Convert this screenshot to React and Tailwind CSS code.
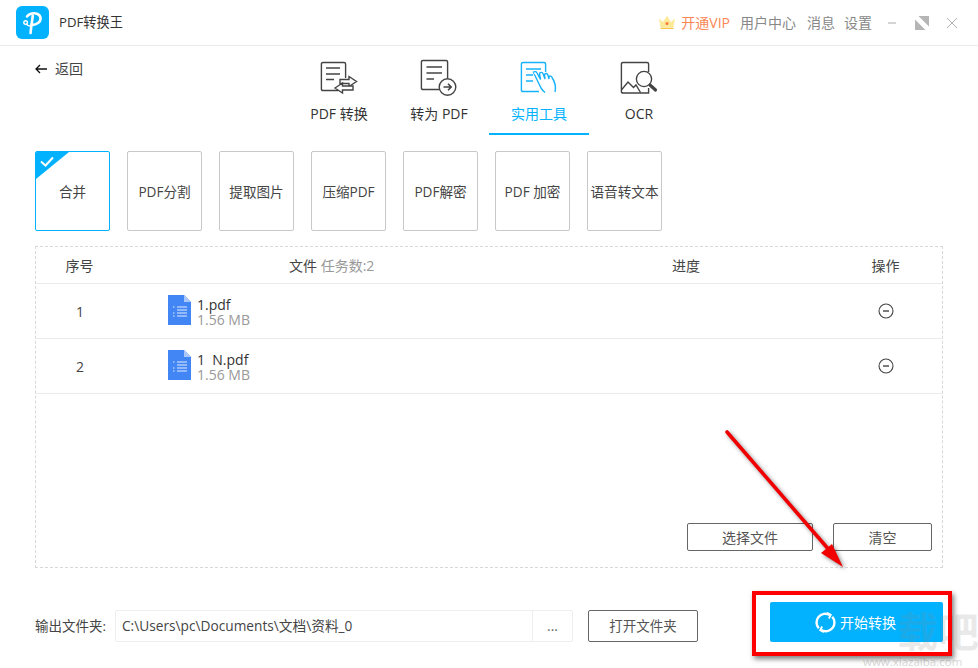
import React from "react";

const FONT = { fontFamily: '"Open Sans","Noto Sans CJK SC",sans-serif' };

function Logo() {
  return (
    <div className="w-[33px] h-[33px] rounded-[6px] bg-[#02b2ff] flex items-center justify-center">
      <svg width="33" height="33" viewBox="0 0 33 33" fill="none" stroke="#fff" strokeLinecap="round">
        <path d="M11 10.5C13 7.6 18 6.5 21.5 8C25.5 9.8 25.5 14.5 22 17C20 18.4 17.5 19 15.5 18.8" strokeWidth="2.6" />
        <path d="M16.8 9.5C16.2 15 15 21 14.6 27" strokeWidth="2.6" />
        <circle cx="9.6" cy="16.6" r="1.8" strokeWidth="1.4" />
        <path d="M10.8 18.5C12 20 13.5 20.2 15 20" strokeWidth="1.4" />
      </svg>
    </div>
  );
}

function Crown() {
  return (
    <svg width="18" height="15" viewBox="0 0 18 15">
      <path d="M1 3.5L5 7L9 0.8L13 7L17 3.5L15.5 12H2.5Z" fill="#fde99a" />
      <rect x="2.5" y="12.6" width="13" height="1.4" fill="#f9c646" />
      <circle cx="9" cy="8.5" r="1.5" fill="#fa7a3c" />
    </svg>
  );
}

function IconConvert() {
  return (
    <svg width="38" height="34" viewBox="0 0 38 34" fill="none" stroke="#444" strokeWidth="1.4">
      <path d="M18 29.5H3C1.9 29.5 1.4 29 1.4 28V3C1.4 2 1.9 1.5 3 1.5H24C25 1.5 25.6 2 25.6 3V17" />
      <path d="M6 7H20M6 13H20M6 18.5H14" />
      <path d="M20 18.5H29V15.5L36.5 20.5L29 25.5V22.5H20Z" fill="#fff" />
      <path d="M15 27L22.5 22V25H33V29H22.5V32Z" fill="#fff" />
    </svg>
  );
}

function IconToPdf() {
  return (
    <svg width="38" height="38" viewBox="0 0 38 38" fill="none" stroke="#444" strokeWidth="1.4">
      <path d="M19 30.5H3C1.9 30.5 1.4 30 1.4 29V3C1.4 2 1.9 1.5 3 1.5H26C27 1.5 27.6 2 27.6 3V19" />
      <path d="M6.5 8H22M6.5 14H22M6.5 20H14" />
      <circle cx="27.5" cy="28" r="8.3" fill="#fff" />
      <path d="M23.5 28H31M28 24.8L31.2 28L28 31.2" strokeWidth="1.6" />
    </svg>
  );
}

function IconTools() {
  return (
    <svg width="38" height="34" viewBox="0 0 38 34" fill="none" stroke="#15b2fb" strokeWidth="1.4">
      <path d="M19 30.5H3C1.9 30.5 1.4 30 1.4 29V3C1.4 2 1.9 1.5 3 1.5H24C25 1.5 25.6 2 25.6 3V11" />
      <path d="M6 8H21M6 14H13M6 20H13" />
      <path d="M13.5 11.5L21 27C22 28.5 23 30 25 31.5" />
      <path d="M13 11.5C14.5 10 16.5 10.5 17 12L20.5 18.5L19.5 12.5C20.5 11 22.5 11 23 12.5L25 18L24.5 13.5C25.5 12.2 27 12.2 27.8 13.8L29 18L29 15.5C30 14.5 31.5 15 32 16.5C35 21 36.5 25 35 31" fill="#fff" />
    </svg>
  );
}

function IconOcr() {
  return (
    <svg width="38" height="34" viewBox="0 0 38 34" fill="none" stroke="#444" strokeWidth="1.4">
      <path d="M17 32H3C1.9 32 1.4 31.5 1.4 30.5V3C1.4 2 1.9 1.5 3 1.5H27C28 1.5 28.6 2 28.6 3V11M28.6 27V32H15" />
      <path d="M1.4 29L8 21L13.5 26.5L16 24L20.5 31.5" />
      <circle cx="24" cy="18" r="7.6" fill="#fff" />
      <path d="M30 24L35.5 29" strokeWidth="3.2" strokeLinecap="round" />
    </svg>
  );
}

function Tab({ icon, label, active }) {
  return (
    <div className={`w-[100px] h-[89px] flex flex-col items-center border-b-2 ${active ? "border-[#02b2ff]" : "border-transparent"}`}>
      <div className="h-[58px] pt-[6px] flex items-center">{icon}</div>
      <div className={`text-[14px] leading-[20px] ${active ? "text-[#02b2ff]" : "text-[#333]"}`}>{label}</div>
    </div>
  );
}

function ToolCard({ label, active }) {
  return (
    <div className={`relative w-[75px] h-[80px] pt-[2px] rounded-[2px] border flex items-center justify-center text-[13.6px] text-[#444] whitespace-nowrap overflow-hidden ${active ? "border-[#02b2ff]" : "border-[#c8c8c8]"}`}>
      {active && (
        <svg className="absolute left-0 top-0" width="33" height="27" viewBox="0 0 33 27">
          <path d="M0 0H33L0 27Z" fill="#02b2ff" />
          <path d="M5 9.5L9.5 13.5L17 5.5" fill="none" stroke="#fff" strokeWidth="2" />
        </svg>
      )}
      {label}
    </div>
  );
}

function FileIcon() {
  return (
    <svg className="-mt-[2px]" width="23" height="30" viewBox="0 0 23 30">
      <path d="M0 0H16L23 7V30H0Z" fill="#4285f4" />
      <path d="M16 0L23 7H16Z" fill="#a9c7f9" />
      <path d="M9 12H19M9 15H19M9 18H19M9 21H19" stroke="#fff" strokeWidth="1" opacity="0.85" />
      <path d="M5 12H6.5M5 18H6.5M5 21H6.5" stroke="#fff" strokeWidth="1" opacity="0.85" />
    </svg>
  );
}

function MinusCircle() {
  return (
    <svg width="16" height="16" viewBox="0 0 16 16" fill="none" stroke="#444" strokeWidth="1.1">
      <circle cx="8" cy="8" r="7" />
      <path d="M5 8H11" strokeWidth="1.4" />
    </svg>
  );
}

function FileRow({ n, name }) {
  return (
    <div className="h-[55px] flex items-center border-b border-[#ebebeb]">
      <div className="w-[88px] text-center text-[14px] text-[#444]">{n}</div>
      <div className="w-[44px]" />
      <FileIcon />
      <div className="ml-[6px] flex-1 flex flex-col pt-[1px]">
        <span className="text-[14px] leading-[15px] text-[#333] whitespace-pre">{name}</span>
        <span className="text-[14px] leading-[15px] text-[#999]">1.56 MB</span>
      </div>
      <div className="w-[113px] flex justify-center">
        <MinusCircle />
      </div>
    </div>
  );
}

function Outline({ className, children }) {
  return (
    <div className={`border border-[#666] rounded-[2px] pt-[1px] flex items-center justify-center text-[#555] ${className}`}>
      {children}
    </div>
  );
}

export default function App() {
  return (
    <div style={FONT} className="relative w-[978px] h-[668px] overflow-hidden bg-white flex flex-col">
      {/* header */}
      <div className="h-[46px] shrink-0 border-b border-[#ececec] flex items-center pl-[16px] pr-[20px]">
        <Logo />
        <span className="ml-[10px] text-[13.2px] text-[#333]">PDF转换王</span>
        <div className="ml-auto flex items-center text-[14px] text-[#888]">
          <Crown />
          <span className="ml-[5px] text-[#fb8754]">开通VIP</span>
          <span className="ml-[10px]">用户中心</span>
          <span className="ml-[11px]">消息</span>
          <span className="ml-[9px]">设置</span>
          <svg className="ml-[16px]" width="8" height="10" viewBox="0 0 8 10">
            <path d="M0 5H8" stroke="#aaa" strokeWidth="1" />
          </svg>
          <svg className="ml-[19px]" width="14" height="14" viewBox="0 0 14 14">
            <path d="M3.5 0H14V10.5ZM0 3.5V14H10.5Z" fill="#b5b5b5" />
          </svg>
          <svg className="ml-[17px]" width="12" height="12" viewBox="0 0 12 12">
            <path d="M1 1L11 11M11 1L1 11" stroke="#b0b0b0" strokeWidth="1" />
          </svg>
        </div>
      </div>

      {/* main */}
      <div className="flex-1 px-[35px] flex flex-col">
        <div className="relative h-[89px]">
          <div className="absolute left-0 top-[12px] flex items-center text-[14px] text-[#444]">
            <svg width="12" height="10" viewBox="0 0 12 10" fill="none" stroke="#111" strokeWidth="1.3">
              <path d="M12 5H1M5 1L1 5L5 9" />
            </svg>
            <span className="ml-[8px]">返回</span>
          </div>
          <div className="ml-[254px] flex">
            <Tab icon={<IconConvert />} label="PDF 转换" />
            <Tab icon={<IconToPdf />} label="转为 PDF" />
            <Tab icon={<IconTools />} label="实用工具" active />
            <Tab icon={<IconOcr />} label="OCR" />
          </div>
        </div>

        <div className="mt-[16px] flex gap-[17px]">
          <ToolCard label="合并" active />
          <ToolCard label="PDF分割" />
          <ToolCard label="提取图片" />
          <ToolCard label="压缩PDF" />
          <ToolCard label="PDF解密" />
          <ToolCard label="PDF 加密" />
          <ToolCard label="语音转文本" />
        </div>

        {/* table */}
        <div className="mt-[15px] w-[908px] h-[322px] border border-dashed border-[#d8d8d8] flex flex-col">
          <div className="h-[37px] shrink-0 pt-[1px] flex items-center border-b border-[#ebebeb] text-[14px] text-[#444]">
            <div className="w-[87px] text-center">序号</div>
            <div className="w-[500px] pl-[166px]">
              文件 <span className="text-[#999]">任务数:2</span>
            </div>
            <div className="pl-[49px] whitespace-nowrap">进度</div>
            <div className="ml-auto w-[113px] text-center">操作</div>
          </div>
          <FileRow n="1" name="1.pdf" />
          <FileRow n="2" name="1  N.pdf" />
          <div className="mt-auto mb-[16px] flex justify-end pr-[10px] gap-[20px]">
            <Outline className="w-[126px] h-[28px] text-[14px]">选择文件</Outline>
            <Outline className="w-[99px] h-[28px] text-[14px]">清空</Outline>
          </div>
        </div>

        {/* bottom */}
        <div className="mt-[34px] flex items-end">
          <span className="h-[32px] leading-[33px] text-[13.5px] text-[#444] w-[80px] whitespace-nowrap">输出文件夹:</span>
          <div className="w-[458px] h-[32px] border border-[#eeeeee] rounded-[2px] flex items-center text-[13.7px] text-[#444]">
            <span className="flex-1 pl-[6px] pt-[1px]">C:\Users\pc\Documents\文档\资料_0</span>
            <span className="w-[40px] h-full border-l border-[#eeeeee] flex items-center justify-center text-[#666]">...</span>
          </div>
          <Outline className="ml-[15px] w-[110px] h-[32px] text-[13.5px]">打开文件夹</Outline>
          <div className="ml-[72px] w-[173px] h-[40px] pt-[1px] rounded-[2px] bg-[#02b2ff] flex items-center justify-center text-white text-[14px]">
            <svg className="mr-[4px] -ml-[2px]" width="21" height="21" viewBox="0 0 20 20" fill="none" stroke="#fff" strokeWidth="2.3">
              <path d="M3.6 15.5A8.3 8.3 0 0 1 14 2.8" />
              <path d="M16.4 4.5A8.3 8.3 0 0 1 6 17.2" />
              <path d="M11.5 0.8L15 2.8L13.2 6.2" strokeWidth="1.8" />
              <path d="M8.5 19.2L5 17.2L6.8 13.8" strokeWidth="1.8" />
            </svg>
            开始转换
          </div>
        </div>
      </div>

      {/* watermark */}
      <div className="absolute left-[897px] top-[608px] text-[41px] leading-[46px] font-bold text-[#8a8a8a]/20 whitespace-nowrap pointer-events-none">载吧</div>
      <div className="absolute left-[863px] top-[656px] text-[11.5px] leading-[12px] text-[#8a8a8a]/35 whitespace-nowrap pointer-events-none">www.xiazaiba.com</div>

      {/* red annotation */}
      <div className="absolute left-[752px] top-[591px] w-[200px] h-[65px] border-[4px] border-[#ff0000] shadow-[2px_3px_5px_rgba(0,0,0,0.5)]" />
      <svg className="absolute left-0 top-0 pointer-events-none drop-shadow-[2px_2px_2px_rgba(0,0,0,0.45)]" width="978" height="668" viewBox="0 0 978 668">
        <path d="M727 432L830 551" stroke="#f00000" strokeWidth="3.6" strokeLinecap="round" fill="none" />
        <path d="M843 567L821 553L832 544Z" fill="#f00000" />
      </svg>
    </div>
  );
}
